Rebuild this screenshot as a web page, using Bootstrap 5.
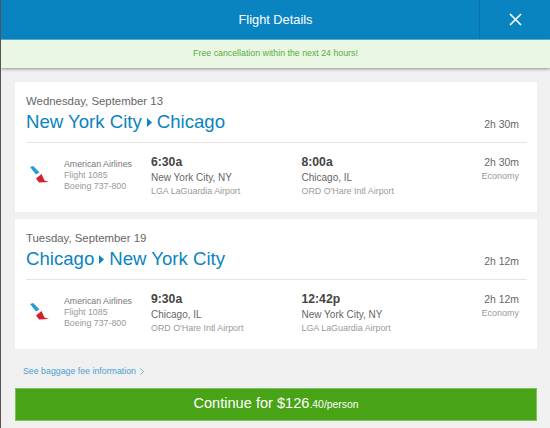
<!DOCTYPE html>
<html lang="en">
<head>
<meta charset="utf-8">
<title>Flight Details</title>
<link href="https://cdn.jsdelivr.net/npm/bootstrap@5.3.0/dist/css/bootstrap.min.css" rel="stylesheet">
<style>
html,body{height:100%;}
body{background:#f0f0f0;font-family:"Liberation Sans",Arial,sans-serif;overflow:hidden;border-left:1px solid #555;}
.fd-head{height:40px;background:#0a84c1;border-bottom:1px solid #5db4e0;color:#fff;}
.fd-title{font-size:12.8px;padding-left:71px;}
.fd-close{width:71px;border-left:1px solid #0873aa;}
.fd-banner{height:28px;background:#e9f7e4;color:#5aac3c;font-size:8.8px;box-shadow:0 1px 3px rgba(0,0,0,.4);}
.fd-main{padding:14px 13px 0 14px;}
.fd-card{background:#fff;height:130px;padding:12px 10px 0 11px;margin-bottom:7px;}
.fd-date{font-size:11.4px;color:#666;line-height:14px;margin-bottom:1px;}
.fd-route{font-size:18.6px;color:#0a84c1;line-height:26px;}
.fd-route svg{margin:0 5px 1px 5px;}
.fd-total{font-size:10.4px;color:#666;padding-right:8px;margin-top:5px;}
.fd-rule{height:1px;background:#e4e4e4;margin-top:7px;}
.fd-seg{padding-top:12px;}
.fd-logo{width:38px;padding-top:11px;padding-left:4px;}
.fd-air{width:87px;font-size:8.8px;color:#999;line-height:11px;padding-top:3.5px;}
.fd-air b{font-weight:400;color:#777;display:block;}
.fd-stop{width:150.5px;}
.fd-time{font-size:12.2px;font-weight:700;color:#444;line-height:15px;}
.fd-city{font-size:10px;color:#666;line-height:14px;margin-top:1px;}
.fd-port{font-size:8.9px;color:#999;line-height:13px;}
.fd-dur{font-size:10.4px;color:#666;line-height:15px;text-align:right;padding-right:8px;}
.fd-class{font-size:9px;color:#999;line-height:13px;text-align:right;padding-right:8px;}
.fd-bag{font-size:8.8px;font-weight:400;color:#4d9fcf;text-decoration:none;padding-left:8px;line-height:12px;margin-top:16px;margin-bottom:11px;}
.fd-go{height:33px;background:#48a316;border:1px solid #7cc25c;border-radius:0;color:#fff;font-size:14.6px;padding:0 0 2px;width:100%;}
.fd-go:hover{background:#48a316;color:#fff;border-color:#7cc25c;}
.fd-go small{font-size:10.4px;}
</style>
</head>
<body>
<header class="fd-head d-flex">
  <div class="fd-title flex-grow-1 d-flex align-items-center justify-content-center">Flight Details</div>
  <div class="fd-close d-flex align-items-center justify-content-center">
    <svg width="13" height="13" viewBox="0 0 13 13" aria-label="Close"><path d="M1 1L12 12M12 1L1 12" stroke="#fff" stroke-width="1.7"/></svg>
  </div>
</header>
<div class="fd-banner d-flex align-items-center justify-content-center">Free cancellation within the next 24 hours!</div>
<main class="fd-main">
  <section class="fd-card">
    <div class="fd-date">Wednesday, September 13</div>
    <div class="d-flex justify-content-between align-items-center">
      <div class="fd-route">New York City<svg width="5" height="9" viewBox="0 0 5 9"><path d="M0 0L5 4.5L0 9Z" fill="#0a84c1"/></svg>Chicago</div>
      <div class="fd-total">2h 30m</div>
    </div>
    <div class="fd-rule"></div>
    <div class="fd-seg d-flex">
      <div class="fd-logo"><svg class="d-block" width="19" height="17" viewBox="0 0 19 17"><path d="M0 1L3.200 0L9.500 6.500L6 8.500Z" fill="#2a9ad6"/><path d="M6 12.500L11.500 8L14.500 14.500L19 16L9 16.500Z" fill="#d3222e"/></svg></div>
      <div class="fd-air"><b>American Airlines</b>Flight 1085<br>Boeing 737-800</div>
      <div class="fd-stop"><div class="fd-time">6:30a</div><div class="fd-city">New York City, NY</div><div class="fd-port">LGA LaGuardia Airport</div></div>
      <div class="fd-stop"><div class="fd-time">8:00a</div><div class="fd-city">Chicago, IL</div><div class="fd-port">ORD O'Hare Intl Airport</div></div>
      <div class="flex-grow-1"><div class="fd-dur">2h 30m</div><div class="fd-class">Economy</div></div>
    </div>
  </section>
  <section class="fd-card">
    <div class="fd-date">Tuesday, September 19</div>
    <div class="d-flex justify-content-between align-items-center">
      <div class="fd-route">Chicago<svg width="5" height="9" viewBox="0 0 5 9"><path d="M0 0L5 4.5L0 9Z" fill="#0a84c1"/></svg>New York City</div>
      <div class="fd-total">2h 12m</div>
    </div>
    <div class="fd-rule"></div>
    <div class="fd-seg d-flex">
      <div class="fd-logo"><svg class="d-block" width="19" height="17" viewBox="0 0 19 17"><path d="M0 1L3.200 0L9.500 6.500L6 8.500Z" fill="#2a9ad6"/><path d="M6 12.500L11.500 8L14.500 14.500L19 16L9 16.500Z" fill="#d3222e"/></svg></div>
      <div class="fd-air"><b>American Airlines</b>Flight 1085<br>Boeing 737-800</div>
      <div class="fd-stop"><div class="fd-time">9:30a</div><div class="fd-city">Chicago, IL</div><div class="fd-port">ORD O'Hare Intl Airport</div></div>
      <div class="fd-stop"><div class="fd-time">12:42p</div><div class="fd-city">New York City, NY</div><div class="fd-port">LGA LaGuardia Airport</div></div>
      <div class="flex-grow-1"><div class="fd-dur">2h 12m</div><div class="fd-class">Economy</div></div>
    </div>
  </section>
  <a class="fd-bag d-flex align-items-center" href="#">See baggage fee information<svg class="ms-1" width="4" height="7" viewBox="0 0 4 7"><path d="M.5 .5L3.5 3.5L.5 6.5" fill="none" stroke="#4d9fcf" stroke-width=".8"/></svg></a>
  <button class="btn fd-go" type="button">Continue for $126<small>.40/person</small></button>
</main>
<script src="https://cdn.jsdelivr.net/npm/bootstrap@5.3.0/dist/js/bootstrap.bundle.min.js"></script>
</body>
</html>
